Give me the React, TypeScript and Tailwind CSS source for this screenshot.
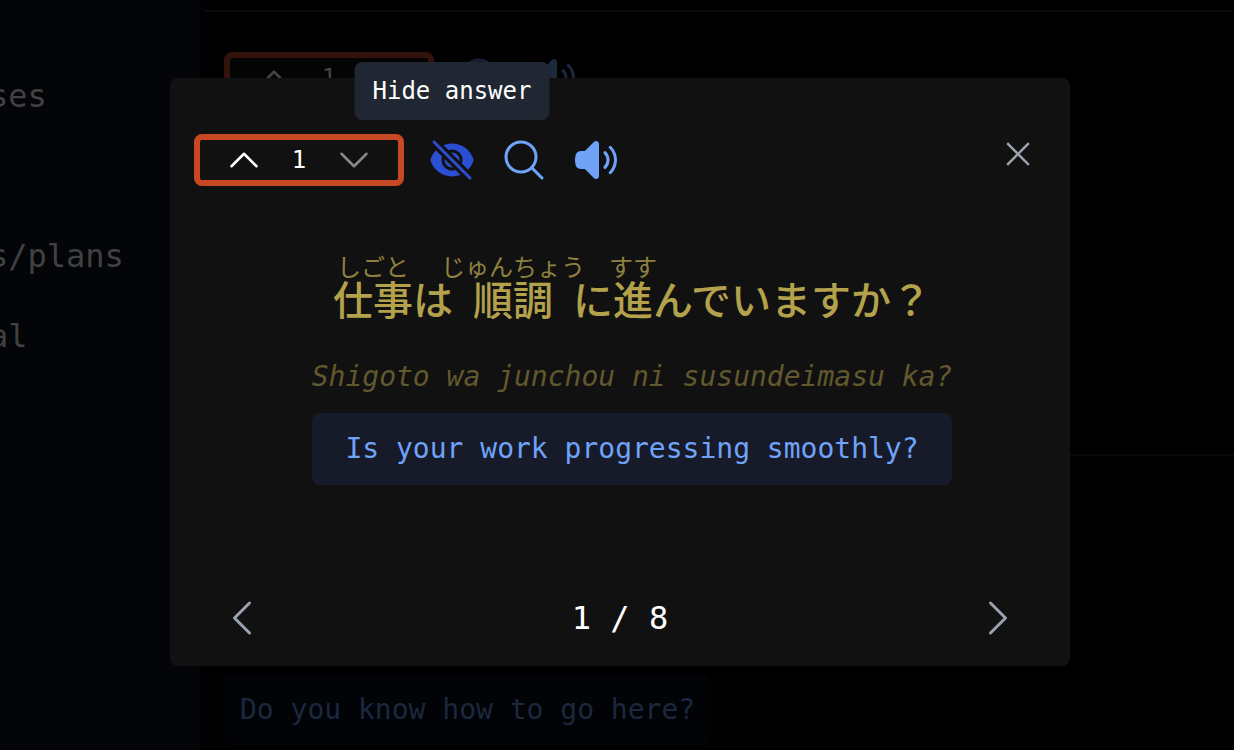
import React from "react";
import {
  HiEyeSlash,
  HiOutlineMagnifyingGlass,
  HiSpeakerWave,
} from "react-icons/hi2";

type Direction = "up" | "down" | "left" | "right";

const chevrons: Record<Direction, string> = {
  up: "m4.5 15.75 7.5-7.5 7.5 7.5",
  down: "m19.5 8.25-7.5 7.5-7.5-7.5",
  left: "M15.75 19.5 8.25 12l7.5-7.5",
  right: "m8.25 4.5 7.5 7.5-7.5 7.5",
};

function Chevron({ to, className }: { to: Direction; className: string }) {
  return (
    <svg viewBox="0 0 24 24" fill="none" stroke="currentColor" strokeWidth="1.5" strokeLinecap="round" strokeLinejoin="round" className={className} aria-hidden="true">
      <path d={chevrons[to]} />
    </svg>
  );
}

function Counter({ className }: { className: string }) {
  return (
    <div className={`flex h-[52px] w-[210px] items-center justify-between rounded-lg border-6 px-6 text-2xl ${className}`}>
      <button type="button" aria-label="Increase">
        <Chevron to="up" className="size-10" />
      </button>
      <span>1</span>
      <button type="button" aria-label="Decrease" className="opacity-50">
        <Chevron to="down" className="size-10" />
      </button>
    </div>
  );
}

function Background() {
  return (
    <div className="flex min-h-screen">
      <nav className="flex w-[200px] shrink-0 flex-col gap-10 overflow-hidden bg-[#030509] pt-[76px] text-[32px] leading-10 text-[#414141]">
        <a href="#courses" className="-ml-[11px]">ses</a>
        <span className="h-10" />
        <a href="#plans" className="-ml-[11px]">s/plans</a>
        <a href="#account" className="-ml-[11px]">al</a>
      </nav>
      <main className="min-w-0 flex-1 bg-black">
        <div className="h-3 rounded-bl-lg border-b-2 border-[#090909]" />
        <section className="h-[444px] border-b-2 border-[#090909] px-6 pt-10">
          <div className="flex items-center gap-6">
            <Counter className="border-[#32120a] bg-[#040404] text-[#444]" />
            <button type="button" aria-label="Search" className="text-[#172033]">
              <HiOutlineMagnifyingGlass className="size-12" />
            </button>
            <button type="button" aria-label="Play audio" className="text-[#1b283d]">
              <HiSpeakerWave className="size-12" />
            </button>
          </div>
        </section>
        <section className="flex px-6 pt-[218px]">
          <p className="rounded-lg bg-[#020307] px-4 py-4 text-[28px] leading-10 text-[#1b283d]">
            Do you know how to go here?
          </p>
        </section>
      </main>
    </div>
  );
}

function Reading({ base, kana }: { base: string; kana: string }) {
  return (
    <ruby className="[ruby-align:center]">
      {base}
      <rt className="text-2xl leading-6 font-normal text-[#8f8140]">{kana}</rt>
    </ruby>
  );
}

function Sentence() {
  return (
    <p lang="ja" className="text-[40px] leading-[60px] font-medium text-[#b3a14b] font-['Noto_Sans_CJK_JP',sans-serif]">
      <Reading base="仕事" kana="しごと" />は<Reading base="順調" kana="じゅんちょう" />に<Reading base="進" kana="すす" />んでいますか？
    </p>
  );
}

export default function App() {
  return (
    <div className="relative h-screen overflow-hidden bg-black font-['DejaVu_Sans_Mono',monospace]">
      <Background />
      <div className="absolute inset-0 flex items-center justify-center pb-1.5 pl-1.5">
        <div role="dialog" aria-label="Sentence card" className="flex min-h-[588px] w-full max-w-[900px] flex-col rounded-lg bg-[#111] pt-14 pb-6">
          <header className="flex items-start justify-between pr-8 pl-6">
            <div className="flex items-center gap-6">
              <Counter className="border-[#c84823] text-white" />
              <div className="relative flex">
                <button type="button" aria-label="Hide answer" aria-describedby="hide-tip" className="text-[#2a4fd3]">
                  <HiEyeSlash className="size-12" />
                </button>
                <span id="hide-tip" role="tooltip" className="absolute bottom-full left-1/2 mb-4 -translate-x-1/2 rounded-lg bg-[#212834]/97 px-[18px] py-[13px] text-2xl whitespace-nowrap text-white">
                  Hide answer
                </span>
              </div>
              <button type="button" aria-label="Search" className="text-[#6fa3f8]">
                <HiOutlineMagnifyingGlass className="size-12" />
              </button>
              <button type="button" aria-label="Play audio" className="text-[#6fa3f8]">
                <HiSpeakerWave className="size-12" />
              </button>
            </div>
            <button type="button" aria-label="Close" className="text-[#9ca3b0]">
              <svg viewBox="0 0 24 24" fill="none" stroke="currentColor" strokeWidth="1.5" className="size-10" aria-hidden="true">
                <path d="M5.5 18.5 18.5 5.5M5.5 5.5l13 13" />
              </svg>
            </button>
          </header>

          <div className="flex flex-1 flex-col items-center pt-17 pl-6">
            <Sentence />
            <p className="mt-[29px] text-[28px] leading-10 text-[#62582e] italic">
              Shigoto wa junchou ni susundeimasu ka?
            </p>
            <p className="mt-4 w-[640px] rounded-lg bg-[#171a29] py-4 text-center text-[28px] leading-10 text-[#6fa3f8]">
              Is your work progressing smoothly?
            </p>
          </div>

          <footer className="flex items-center justify-between px-12 text-[32px] text-[#9ca3b0]">
            <button type="button" aria-label="Previous">
              <Chevron to="left" className="size-12" />
            </button>
            <span className="leading-10 text-white">1 / 8</span>
            <button type="button" aria-label="Next">
              <Chevron to="right" className="size-12" />
            </button>
          </footer>
        </div>
      </div>
    </div>
  );
}
